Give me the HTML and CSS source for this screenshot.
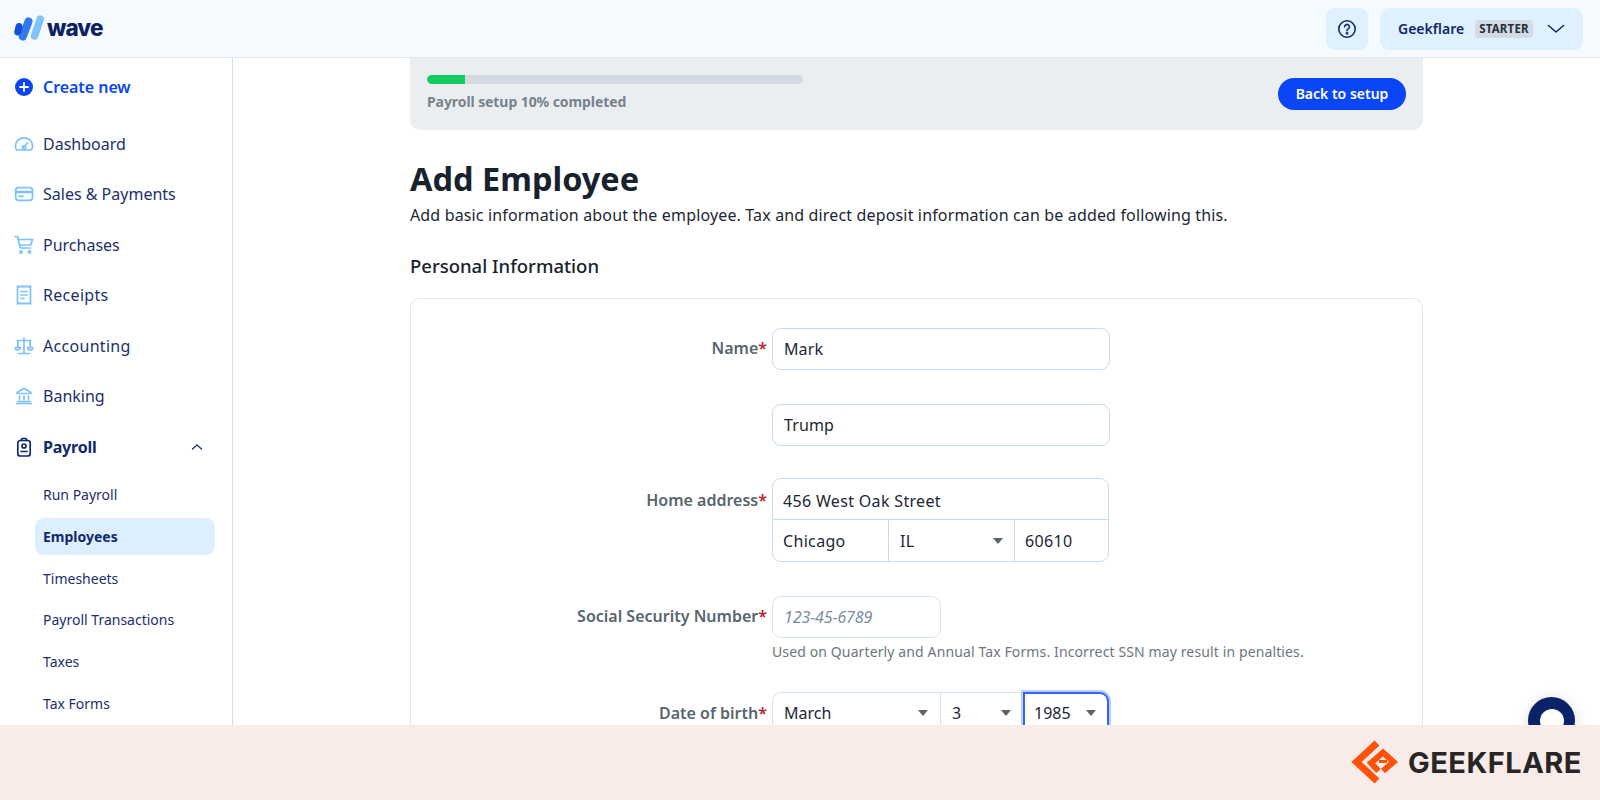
FILE: index.html
```html
<!DOCTYPE html>
<html lang="en">
<head>
<meta charset="utf-8">
<title>Add Employee</title>
<link rel="stylesheet" href="styles.css">
</head>
<body>
<div class="app">
  <header class="topbar">
    <div class="logo">
      <svg class="logo-mark" width="32" height="27" viewBox="0 0 32 27" fill="none" stroke-linecap="round"><path d="M20.500 21L26.200 4" stroke="#7fc3fb" stroke-width="7.500"/><path d="M8.800 21.500L14.500 6.500" stroke="#2f78ee" stroke-width="8"/><path d="M3.800 17L5 11.500" stroke="#1450d8" stroke-width="7"/></svg>
      <span class="logo-text">wave</span>
    </div>
    <div class="top-actions">
      <div class="help-btn">
        <svg width="20" height="20" viewBox="0 0 20 20" fill="none" stroke="#0f2a6b" stroke-width="1.6"><circle cx="10" cy="10" r="8.200"/><path d="M7.600 7.800a2.400 2.400 0 1 1 3.600 2.100c-.8.500-1.200.9-1.200 1.800" stroke-linecap="round"/><circle cx="10" cy="14.300" r=".6" fill="#0f2a6b"/></svg>
      </div>
      <div class="account-btn">
        <span class="account-name">Geekflare</span>
        <span class="badge">STARTER</span>
        <svg width="18" height="10" viewBox="0 0 18 10" fill="none" stroke="#0f2a6b" stroke-width="1.6" stroke-linecap="round" stroke-linejoin="round"><path d="M1.500 1.500l7.500 6.500 7.500-6.500"/></svg>
      </div>
    </div>
  </header>
  <div class="body">
    <aside class="sidebar">
      <a class="nav-item create">
        <svg width="20" height="20" viewBox="0 0 20 20"><circle cx="10" cy="10" r="9" fill="#0a46f0"/><path d="M10 6v8M6 10h8" stroke="#fff" stroke-width="1.800" stroke-linecap="round"/></svg>
        <span>Create new</span>
      </a>
      <a class="nav-item">
        <svg width="20" height="20" viewBox="0 0 20 20" fill="none" stroke="#7cc2fb" stroke-width="1.700" stroke-linecap="round" stroke-linejoin="round"><path d="M3 16h14c1-.2 1.500-1.500 1.500-4.500A8.300 8.300 0 0 0 10 3.800a8.300 8.300 0 0 0-8.500 7.700c0 3 .5 4.300 1.500 4.500z"/><path d="M9 13.500l4.500-4.500"/><circle cx="10" cy="13.500" r="1.700"/></svg>
        <span>Dashboard</span>
      </a>
      <a class="nav-item">
        <svg width="20" height="20" viewBox="0 0 20 20" fill="none" stroke="#7cc2fb" stroke-width="1.700" stroke-linecap="round"><rect x="1.700" y="3.700" width="16.800" height="12.600" rx="2.800"/><path d="M2 8h16" stroke-width="2.600"/><path d="M5 12.300h4"/></svg>
        <span>Sales &amp; Payments</span>
      </a>
      <a class="nav-item">
        <svg width="20" height="20" viewBox="0 0 20 20" fill="none" stroke="#7cc2fb" stroke-width="1.700" stroke-linecap="round" stroke-linejoin="round"><path d="M1 1.500h2.500L6.300 13h10"/><path d="M4.200 4.500h14.300l-1.800 5.500H5.800"/><circle cx="7" cy="17" r="1.100"/><circle cx="15.500" cy="17" r="1.100"/></svg>
        <span>Purchases</span>
      </a>
      <a class="nav-item spaced">
        <svg width="20" height="20" viewBox="0 0 20 20" fill="none" stroke="#7cc2fb" stroke-width="1.700" stroke-linecap="round" stroke-linejoin="round"><path d="M3.500 1l1.700 1 1.600-1 1.600 1L10 1l1.600 1 1.600-1 1.600 1 1.700-1v18l-1.700-1-1.600 1-1.600-1L10 19l-1.600-1-1.600 1-1.600-1-1.700 1z"/><path d="M7 6.500h6M7 10h6M7 13.500h3"/></svg>
        <span>Receipts</span>
      </a>
      <a class="nav-item spaced">
        <svg width="20" height="20" viewBox="0 0 20 20" fill="none" stroke="#7cc2fb" stroke-width="1.700" stroke-linecap="round" stroke-linejoin="round"><path d="M10 2v14.500M3.500 4.500h13M4.500 17.500h11"/><path d="M1.300 11.500a2.500 2.500 0 0 0 5 0zM13.700 11.500a2.500 2.500 0 0 0 5 0zM3.800 5v6M16.200 5v6"/></svg>
        <span>Accounting</span>
      </a>
      <a class="nav-item">
        <svg width="20" height="20" viewBox="0 0 20 20" fill="none" stroke="#7cc2fb" stroke-width="1.700" stroke-linecap="round" stroke-linejoin="round"><path d="M10 2.500L3 6.500v1h14v-1zM2.500 17.500h15M4 15.500h12M5.500 10v3.500M10 10v3.500M14.500 10v3.500"/></svg>
        <span>Banking</span>
      </a>
      <a class="nav-item payroll">
        <svg width="20" height="20" viewBox="0 0 20 20" fill="none" stroke="#0f2a6b" stroke-width="1.700" stroke-linecap="round" stroke-linejoin="round"><rect x="3.800" y="3.500" width="12.400" height="15.500" rx="2.500"/><path d="M7.500 3.500V2.300c0-.5.400-.8.800-.8h3.400c.4 0 .8.300.8.800v1.200"/><circle cx="10" cy="9" r="2"/><path d="M7 14.500h6"/></svg>
        <span>Payroll</span>
        <svg class="caret" width="12" height="8" viewBox="0 0 12 8" fill="none" stroke="#0f2a6b" stroke-width="1.200" stroke-linecap="round" stroke-linejoin="round"><path d="M1.500 6L6 2l4.500 4"/></svg>
      </a>
      <a class="sub-item">Run Payroll</a>
      <a class="sub-item active">Employees</a>
      <a class="sub-item">Timesheets</a>
      <a class="sub-item">Payroll Transactions</a>
      <a class="sub-item">Taxes</a>
      <a class="sub-item">Tax Forms</a>
    </aside>
    <main class="main">
      <div class="content">
        <section class="progress-card">
          <div class="progress-info">
            <div class="bar"><div class="bar-fill"></div></div>
            <div class="progress-text">Payroll setup 10% completed</div>
          </div>
          <a class="primary-btn">Back to setup</a>
        </section>
        <h1 class="title">Add Employee</h1>
        <p class="subtitle">Add basic information about the employee. Tax and direct deposit information can be added following this.</p>
        <h2 class="section-title">Personal Information</h2>
        <section class="form-card">
          <div class="row row-name">
            <div class="label">Name<i>*</i></div>
            <div class="field">Mark</div>
          </div>
          <div class="row row-last">
            <div></div>
            <div class="field">Trump</div>
          </div>
          <div class="row row-address">
            <div class="label">Home address<i>*</i></div>
            <div class="group">
              <div class="cell cell-street">456 West Oak Street</div>
              <div class="group-row">
                <div class="cell cell-city">Chicago</div>
                <div class="cell cell-state">IL<b class="arrow"></b></div>
                <div class="cell cell-zip">60610</div>
              </div>
            </div>
          </div>
          <div class="row row-ssn">
            <div class="label">Social Security Number<i>*</i></div>
            <div>
              <div class="field field-ssn">123-45-6789</div>
              <div class="hint">Used on Quarterly and Annual Tax Forms. Incorrect SSN may result in penalties.</div>
            </div>
          </div>
          <div class="row row-dob">
            <div class="label">Date of birth<i>*</i></div>
            <div class="dob">
              <div class="dob-cell dob-month">March<b class="arrow"></b></div>
              <div class="dob-cell dob-day">3<b class="arrow"></b></div>
              <div class="dob-cell dob-year">1985<b class="arrow"></b></div>
            </div>
          </div>
        </section>
      </div>
    </main>
  </div>
</div>
<div class="chat"><span class="chat-hole"></span></div>
<footer class="brand-band">
  <svg width="60" height="55" viewBox="0 0 60 55" fill="none" stroke="#ff5208" stroke-linejoin="miter"><path d="M32 8L11.500 27 32 46" stroke-width="7"/><path d="M33.500 36L26 28 38 17.500 48.500 27 38 36" stroke-width="6"/><path d="M34 26.500h8" stroke-width="3"/></svg>
  <span class="brand-name">GEEKFLARE</span>
</footer>
</body>
</html>
```
FILE: styles.css
```css
* { box-sizing: border-box; }
html, body { margin: 0; height: 100%; overflow: hidden; }
body { font-family: "Noto Sans", "Liberation Sans", sans-serif; color: #1c2733; background: #fff; }

.app { height: 800px; display: flex; flex-direction: column; overflow: hidden; }

.topbar { height: 58px; flex: none; display: flex; justify-content: space-between; align-items: center; padding: 0 17px 0 14px; background: #f5faff; border-bottom: 1px solid #dfe6ee; }
.logo { display: flex; align-items: center; gap: 1px; }
.logo-text { font-family: "Inter", sans-serif; font-weight: 800; font-size: 22.500px; letter-spacing: -0.9px; color: #0c2160; line-height: 1; margin-bottom: 1px; }
.top-actions { display: flex; gap: 12px; }
.help-btn { width: 42px; height: 42px; border-radius: 9px; background: #dff0fe; display: flex; align-items: center; justify-content: center; }
.account-btn { width: 203px; height: 42px; border-radius: 9px; background: #dff0fe; display: flex; align-items: center; padding: 0 18px; }
.account-name { font-size: 14px; font-weight: 600; color: #0f2a6b; width: 77px; flex: none; }
.badge { font-size: 11.500px; font-weight: 700; letter-spacing: 0.2px; color: #26303c; background: #d3dce5; border-radius: 4px; height: 18px; width: 58px; flex: none; display: flex; align-items: center; justify-content: center; margin-right: 14px; }

.body { flex: 1; min-height: 0; display: flex; }

.sidebar { width: 233px; flex: none; border-right: 1px solid #d6e0ea; padding: 3.500px 0 0 14px; overflow: hidden; }
.nav-item { height: 50.500px; display: flex; align-items: center; gap: 9px; font-size: 16px; color: #1c2f6e; }
.nav-item.spaced { letter-spacing: .3px; }
.nav-item.create { color: #0a46f0; font-weight: 600; margin-bottom: 6.500px; letter-spacing: -0.05px; }
.nav-item.payroll { color: #0f2a6b; font-weight: 700; margin-bottom: 4px; letter-spacing: -0.2px; }
.caret { margin-left: 85px; }
.sub-item { display: flex; align-items: center; height: 37px; width: 180px; margin: 0 0 4.800px 21px; padding-left: 8px; border-radius: 9px; font-size: 14px; color: #1c2f6e; }
.sub-item.active { background: #ddeffe; font-weight: 700; color: #0f2a6b; }

.main { flex: 1; min-width: 0; padding-left: 177px; overflow: hidden; }
.content { width: 1013px; }

.progress-card { height: 72px; background: #ebeef1; border-radius: 0 0 10px 10px; padding: 17px 17px 0; display: flex; justify-content: space-between; align-items: flex-start; }
.progress-info { width: 376px; }
.bar { height: 9px; border-radius: 5px; background: #d3dae2; overflow: hidden; }
.bar-fill { width: 10%; height: 100%; background: #10cc5f; border-radius: 5px 0 0 5px; }
.progress-text { margin-top: 8px; font-size: 14px; line-height: 20px; font-weight: 700; letter-spacing: -0.08px; color: #76828c; }
.primary-btn { width: 128px; height: 32px; margin-top: 3px; padding-bottom: 2px; border-radius: 16px; background: #0a46f5; color: #fff; font-size: 14px; font-weight: 600; display: flex; align-items: center; justify-content: center; }

.title { margin: 28px 0 0; font-size: 32.500px; line-height: 42px; font-weight: 700; color: #18222c; }
.subtitle { margin: 3px 0 0; font-size: 16px; line-height: 24px; letter-spacing: .15px; color: #1c2733; }
.section-title { margin: 26px 0 0; font-size: 18.500px; line-height: 26px; font-weight: 500; color: #18222c; }

.form-card { margin-top: 19px; height: 600px; border: 1px solid #dfe6ee; border-radius: 10px; padding-top: 29px; }
.row { display: grid; grid-template-columns: 356px 338px; column-gap: 5px; align-items: start; }
.row-name { margin-bottom: 34px; }
.row-last { margin-bottom: 32px; }
.row-address { margin-bottom: 34px; }
.row-ssn { margin-bottom: 29px; }
.label { text-align: right; font-size: 16px; font-weight: 600; color: #58656e; line-height: 40px; }
.row-address .label { line-height: 45px; }
.row-dob .label { line-height: 42px; }
.label i { color: #b3262c; font-style: normal; }
.field { height: 42px; border: 1px solid #c5dcf3; border-radius: 9px; padding: 0 11px; font-size: 16px; letter-spacing: .1px; display: flex; align-items: center; color: #1c2733; }
.field-ssn { width: 169px; border-color: #d4e4f5; color: #7a8ca3; font-style: italic; letter-spacing: -0.1px; }
.hint { margin-top: 3px; font-size: 14px; line-height: 22px; letter-spacing: .12px; color: #6b7780; white-space: nowrap; }

.group { height: 84px; width: 337px; border: 1px solid #c5dcf3; border-radius: 9px; }
.cell { display: flex; align-items: center; font-size: 16px; padding: 0 10px; letter-spacing: .33px; color: #1c2733; }
.cell-street { height: 41px; padding-top: 3px; border-bottom: 1px solid #c5dcf3; }
.group-row { display: flex; height: 41px; }
.cell-city { width: 116px; border-right: 1px solid #c5dcf3; }
.cell-state { width: 126px; padding: 0 11px; border-right: 1px solid #c5dcf3; justify-content: space-between; }
.cell-zip { flex: 1; }
.arrow { width: 0; height: 0; border-left: 5px solid transparent; border-right: 5px solid transparent; border-top: 6px solid #58656e; }

.dob { display: flex; height: 42px; width: 337px; border: 1px solid #d4e4f5; border-radius: 9px; }
.dob-cell { display: flex; align-items: center; justify-content: space-between; font-size: 16px; padding: 0 12px 0 11px; color: #1c2733; }
.dob-month { width: 168px; border-right: 1px solid #d4e4f5; }
.dob-day { width: 83px; padding-right: 13px; }
.dob-year { flex: 1; margin: -1px; border: 2px solid #3366f0; border-radius: 0 9px 9px 0; box-shadow: 0 0 0 2px #b9cdfa; padding-left: 9px; padding-right: 11px; }

.chat { position: absolute; left: 1528px; top: 697px; width: 47px; height: 47px; border-radius: 50%; background: #0a2268; display: flex; align-items: center; justify-content: center; box-shadow: 0 2px 14px rgba(0,0,0,.15); }
.chat-hole { width: 24px; height: 24px; border-radius: 50%; background: #fff; }

.brand-band { position: absolute; left: 0; right: 0; top: 725px; height: 75px; background: #f9ebe8; display: flex; align-items: center; justify-content: flex-end; gap: 3px; padding-right: 18px; }
.brand-name { font-family: "Inter", sans-serif; font-size: 29px; font-weight: 700; letter-spacing: 0.5px; color: #262626; }
```
